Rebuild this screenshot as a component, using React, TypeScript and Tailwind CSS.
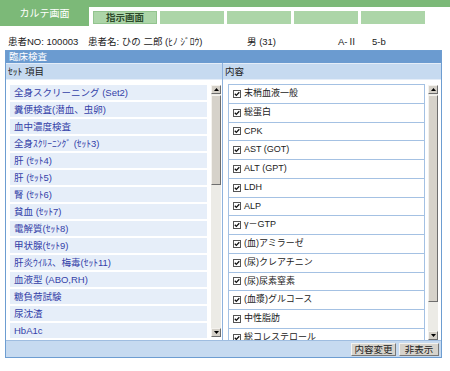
import React from "react";

const FONT = { fontFamily: '"Liberation Sans", "Noto Sans CJK JP", sans-serif' };

const leftItems = [
  "全身スクリーニング (Set2)",
  "糞便検査(潜血、虫卵)",
  "血中濃度検査",
  "全身ｽｸﾘｰﾆﾝｸﾞ (ｾｯﾄ3)",
  "肝 (ｾｯﾄ4)",
  "肝 (ｾｯﾄ5)",
  "腎 (ｾｯﾄ6)",
  "貧血 (ｾｯﾄ7)",
  "電解質(ｾｯﾄ8)",
  "甲状腺(ｾｯﾄ9)",
  "肝炎ｳｲﾙｽ、梅毒(ｾｯﾄ11)",
  "血液型 (ABO,RH)",
  "糖負荷試験",
  "尿沈渣",
  "HbA1c",
];

const rightItems = [
  "末梢血液一般",
  "総蛋白",
  "CPK",
  "AST (GOT)",
  "ALT (GPT)",
  "LDH",
  "ALP",
  "γ－GTP",
  "(血)アミラーゼ",
  "(尿)クレアチニン",
  "(尿)尿素窒素",
  "(血漿)グルコース",
  "中性脂肪",
  "総コレステロール",
];

function Arrow({ up }: { up: boolean }) {
  return (
    <div className="h-[9px] w-full bg-[#d4d0c8] border border-t-[#f4f2ee] border-l-[#f4f2ee] border-b-[#6e6e6e] border-r-[#6e6e6e] flex items-center justify-center">
      <svg width="5" height="3" viewBox="0 0 5 3">
        {up ? <path d="M0 3 L2.5 0 L5 3 Z" fill="#000" /> : <path d="M0 0 L2.5 3 L5 0 Z" fill="#000" />}
      </svg>
    </div>
  );
}

function Scrollbar({ thumbH, className }: { thumbH: number; className: string }) {
  return (
    <div className={"flex flex-col w-[10px] " + className}>
      <Arrow up />
      <div className="flex-1 bg-[#ecebe6] pt-[1px] flex flex-col">
        <div
          className="w-full bg-[#d6d2ca] border border-t-[#f4f2ee] border-l-[#f4f2ee] border-b-[#6e6e6e] border-r-[#6e6e6e]"
          style={{ height: thumbH }}
        />
      </div>
      <Arrow up={false} />
    </div>
  );
}

function Check() {
  return (
    <svg width="8" height="8" viewBox="0 0 8 8" className="shrink-0">
      <rect x="0.5" y="0.5" width="7" height="7" fill="#fff" stroke="#555" />
      <path d="M1.8 3.8 L3.3 5.4 L6.3 2.2" fill="none" stroke="#111" strokeWidth="1.3" />
    </svg>
  );
}

export default function App() {
  return (
    <div className="w-[450px] h-[371px] bg-white overflow-hidden text-[#222]" style={FONT}>
      {/* Top navigation */}
      <div className="flex h-[26px]">
        <div className="w-[89px] h-[26px] bg-[#7cb978] text-white text-[10px] flex items-center justify-center">
          カルテ画面
        </div>
        <div className="flex-1 flex flex-col">
          <div className="h-[7px] bg-[#7cb978]" />
          <div className="flex gap-[3px] pl-[4px] mt-[4px]">
            <div className="w-[64px] h-[13px] bg-[#acd5a8] border border-[#93c48f] text-[9.5px] font-bold text-[#2c4a2a] flex items-center justify-center leading-none">
              指示画面
            </div>
            <div className="w-[64px] h-[13px] bg-[#acd5a8]" />
            <div className="w-[64px] h-[13px] bg-[#acd5a8]" />
            <div className="w-[64px] h-[13px] bg-[#acd5a8]" />
            <div className="w-[64px] h-[13px] bg-[#acd5a8]" />
          </div>
        </div>
      </div>

      {/* Patient info */}
      <div className="flex pl-[8px] pt-[10px] h-[24px] text-[9.5px] leading-[12px] text-[#222]">
        <span className="w-[80px]">患者NO: 100003</span>
        <span className="w-[159px]">患者名: ひの 二郎 (ﾋﾉ ｼﾞﾛｳ)</span>
        <span className="w-[91px]">男 (31)</span>
        <span className="w-[34px]">A-Ⅱ</span>
        <span>5-b</span>
      </div>

      {/* Panel */}
      <div className="ml-[5px] w-[437px] border border-[#6d9dd1] flex flex-col">
        <div className="h-[12px] bg-[#6b9bd0] text-white text-[9.5px] leading-[12px] pl-[3px]">臨床検査</div>
        <div className="flex h-[277px]">
          {/* Left column */}
          <div className="w-[217px] border-r border-[#8fb2dc] flex flex-col">
            <div className="h-[17px] bg-[#c6daf0] border-t border-[#e4edf8] border-b border-[#a9c5e6] text-[9.5px] leading-[15px] pl-[2px]">
              ｾｯﾄ 項目
            </div>
            <div className="flex-1 bg-white flex pt-[5px] pl-[4px]">
              <div className="w-[197px] flex flex-col gap-[2px]">
                {leftItems.map((t) => (
                  <div key={t} className="h-[15px] bg-[#e6eef9] pl-[4px] text-[9.5px] leading-[15px] text-[#3441a8] whitespace-nowrap">
                    {t}
                  </div>
                ))}
              </div>
              <Scrollbar thumbH={90} className="ml-[4px] h-[252px]" />
            </div>
          </div>
          {/* Right column */}
          <div className="flex-1 flex flex-col">
            <div className="h-[17px] bg-[#c6daf0] border-t border-[#e4edf8] border-b border-[#a9c5e6] text-[9.5px] leading-[15px] pl-[2px]">
              内容
            </div>
            <div className="flex-1 bg-white flex pt-[4px] pl-[5px] overflow-hidden">
              <div className="w-[197px] h-[256px] border border-b-0 border-[#a4c1e3] overflow-hidden">
                {rightItems.map((t, i) => (
                  <div
                    key={t}
                    className={
                      "h-[18.75px] flex items-center gap-[3px] pl-[4px] text-[9px] text-[#222] whitespace-nowrap " +
                      (i < rightItems.length - 1 ? "border-b border-[#a4c1e3]" : "")
                    }
                  >
                    <Check />
                    <span>{t}</span>
                  </div>
                ))}
              </div>
              <Scrollbar thumbH={207} className="ml-[3px] mt-[1px] h-[255px]" />
            </div>
          </div>
        </div>
        {/* Bottom bar */}
        <div className="h-[17px] bg-[#c6daf0] border-t border-[#9fbde0] flex items-center justify-end gap-[3px] pr-[2px]">
          <div className="w-[45px] h-[13px] bg-[#d6d3cc] border border-t-[#f4f2ee] border-l-[#f4f2ee] border-b-[#777] border-r-[#777] text-[9.5px] leading-[11px] text-center">
            内容変更
          </div>
          <div className="w-[40px] h-[13px] bg-[#d6d3cc] border border-t-[#f4f2ee] border-l-[#f4f2ee] border-b-[#777] border-r-[#777] text-[9.5px] leading-[11px] text-center">
            非表示
          </div>
        </div>
      </div>
    </div>
  );
}
